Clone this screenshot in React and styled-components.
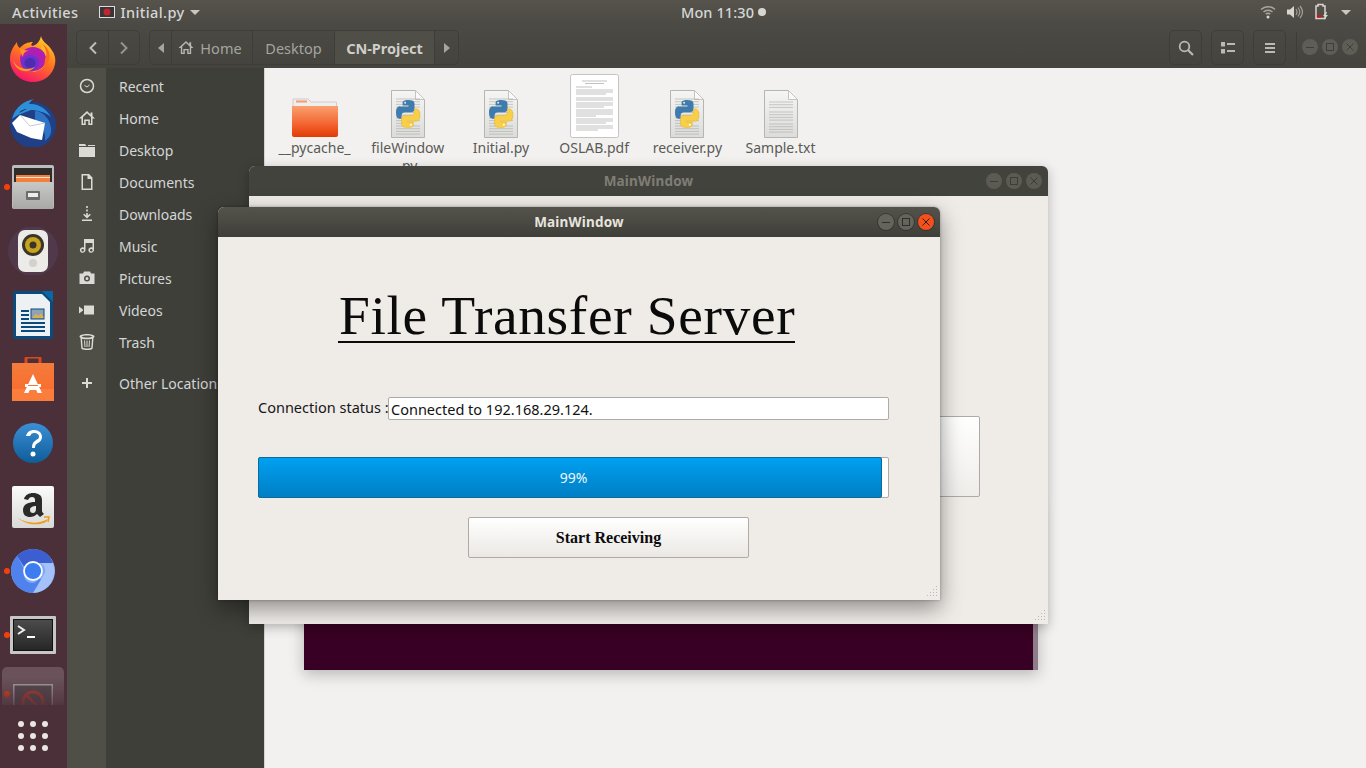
import React from "react";
import styled, { createGlobalStyle } from "styled-components";

const Global = createGlobalStyle`
  html, body { margin: 0; padding: 0; background: #2c2c2c; }
  * { box-sizing: border-box; }
  body { font-family: "Noto Sans", "Open Sans", sans-serif; }
`;

const Desktop = styled.div`
  position: relative;
  width: 1366px;
  height: 768px;
  overflow: hidden;
  display: flex;
  flex-direction: column;
  background: #45443e;
`;

/* top panel */
const Panel = styled.header`
  height: 24px;
  flex: none;
  display: flex;
  align-items: center;
  justify-content: space-between;
  padding: 0 15px 0 12px;
  color: #d5d7d6;
  font-size: 14.5px;
  font-weight: 500;
  letter-spacing: 0.4px;
  background: linear-gradient(#55534b, #4c4a44);
  position: relative;
`;
const PanelLeft = styled.div`
  display: flex;
  align-items: center;
`;
const AppMenu = styled.div`
  display: flex;
  align-items: center;
  gap: 5px;
  margin-left: 21px;
`;
const Clock = styled.div`
  position: absolute;
  left: 681px;
  top: 0;
  height: 24px;
  display: flex;
  align-items: center;
  gap: 4px;
  letter-spacing: 0.1px;
`;
const ClockDot = styled.span`
  width: 8px;
  height: 8px;
  border-radius: 50%;
  background: #d8d6d0;
`;
const Tray = styled.div`
  display: flex;
  align-items: center;
  gap: 11px;
`;
const Caret = styled.span`
  width: 0;
  height: 0;
  border-left: 5px solid transparent;
  border-right: 5px solid transparent;
  border-top: 5px solid #c9c7c0;
`;

const Main = styled.div`
  flex: 1;
  display: flex;
  min-height: 0;
`;

/* dock */
const Dock = styled.nav`
  width: 67px;
  flex: none;
  display: flex;
  flex-direction: column;
  background: #4b2f39;
`;
const DockApps = styled.div`
  height: 681px;
  padding-top: 3px;
  overflow: hidden;
  display: flex;
  flex-direction: column;
  -webkit-mask-image: linear-gradient(#000 96%, rgba(0, 0, 0, 0.25));
`;
const DockItem = styled.div`
  position: relative;
  height: 64px;
  flex: none;
  display: flex;
  align-items: center;
  justify-content: center;
  margin: 0 3px 0 2px;
  padding-top: ${(p) => (p.$active ? 10 : 0)}px;
  border-radius: 5px;
  background: ${(p) => (p.$active ? "rgba(255,255,255,0.17)" : "transparent")};
`;
const RunDot = styled.span`
  position: absolute;
  left: 2px;
  top: ${(p) => (p.$active ? "42%" : "50%")};
  margin-top: -3px;
  width: 6px;
  height: 6px;
  border-radius: 50%;
  background: #f6400c;
`;
const ShowApps = styled.div`
  margin: 16px 0 0 18px;
  display: grid;
  grid-template-columns: repeat(3, 6px);
  grid-auto-rows: 6px;
  gap: 6px;
`;
const ShowDot = styled.span`
  border-radius: 50%;
  background: #e9e7e4;
`;

/* file manager */
const Nautilus = styled.section`
  flex: 1;
  min-width: 0;
  display: flex;
  flex-direction: column;
`;
const HeaderBar = styled.div`
  height: 44px;
  flex: none;
  display: flex;
  align-items: flex-start;
  padding: 6px 0 0 9px;
  background: linear-gradient(#4c4a44, #44433d);
`;
const Group = styled.div`
  height: 35px;
  flex: none;
  display: flex;
  border: 1px solid #3e3d38;
  border-radius: 5px;
  margin-left: ${(p) => p.$ml || 0}px;
  overflow: hidden;
`;
const Seg = styled.div`
  width: ${(p) => p.$w}px;
  display: flex;
  align-items: center;
  justify-content: center;
  gap: 6px;
  font-size: 14.5px;
  color: ${(p) => (p.$on ? "#cfcfca" : "#a5a59f")};
  font-weight: ${(p) => (p.$on ? 700 : 400)};
  background: ${(p) => (p.$on ? "#4f4e47" : "transparent")};
  border-left: ${(p) => (p.$first ? "none" : "1px solid #3e3d38")};
  padding-right: ${(p) => p.$pr || 0}px;
`;
const Separator = styled.div`
  width: 1px;
  height: 30px;
  flex: none;
  margin: 2px 0 0 10px;
  background: #3e3d38;
`;
const WinDots = styled.div`
  display: flex;
  flex: none;
  gap: 4px;
  margin: 9px 0 0 5px;
  height: 16px;
  align-items: center;
`;
const WinBtn = styled.span`
  width: 16px;
  height: 16px;
  border-radius: 50%;
  display: flex;
  align-items: center;
  justify-content: center;
  background: ${(p) => p.$bg};
  box-shadow: ${(p) => (p.$ring ? "0 0 0 1px rgba(0,0,0,0.25)" : "none")};
`;
const Body = styled.div`
  flex: 1;
  min-height: 0;
  display: flex;
`;
const Side = styled.aside`
  width: 197px;
  flex: none;
  padding-top: 2px;
  display: flex;
  flex-direction: column;
  background: linear-gradient(90deg, #4f4f47 39px, #3f3f39 39px);
`;
const SideRow = styled.div`
  height: 32px;
  flex: none;
  display: flex;
  align-items: center;
  margin-top: ${(p) => p.$mt || 0}px;
  color: #d3d6d6;
  font-size: 14px;
  white-space: nowrap;
`;
const SideIcon = styled.span`
  width: 39px;
  flex: none;
  display: flex;
  justify-content: center;
  color: #dcdad5;
  margin-right: 13px;
`;
const Content = styled.main`
  flex: 1;
  background: #f2f1f0;
  border-left: 1px solid #d6d4d0;
  padding: 6px 0 0 3px;
  display: flex;
  align-items: flex-start;
`;
const FileItem = styled.div`
  width: 93.2px;
  flex: none;
  display: flex;
  flex-direction: column;
  align-items: center;
`;
const FileThumb = styled.div`
  height: 64px;
  display: flex;
  align-items: flex-end;
  justify-content: center;
`;
const FileName = styled.div`
  margin-top: 1px;
  font-size: 14px;
  line-height: 18px;
  color: #5a5a55;
  text-align: center;
  width: 84px;
  white-space: ${(p) => (p.$wrap ? "normal" : "nowrap")};
  display: flex;
  justify-content: center;
  flex-wrap: wrap;
`;

/* floating windows */
const Terminal = styled.div`
  position: absolute;
  left: 304px;
  top: 500px;
  width: 734px;
  height: 170px;
  background: #380024;
  border-right: 5px solid #8f7c8a;
  box-shadow: 0 4px 14px rgba(0, 0, 0, 0.25);
`;
const Win = styled.div`
  position: absolute;
  left: ${(p) => p.$x}px;
  top: ${(p) => p.$y}px;
  width: ${(p) => p.$w}px;
  height: ${(p) => p.$h}px;
  display: flex;
  flex-direction: column;
  background: #efebe7;
  border-radius: 6px 6px 0 0;
  box-shadow: ${(p) =>
    p.$focus
      ? "0 8px 22px rgba(0,0,0,0.42), 0 0 3px rgba(0,0,0,0.3)"
      : "0 3px 12px rgba(0,0,0,0.25)"};
`;
const TitleBar = styled.div`
  position: relative;
  height: 30px;
  flex: none;
  border-radius: 6px 6px 0 0;
  display: flex;
  align-items: center;
  justify-content: center;
  font-size: 13.5px;
  font-weight: 700;
  letter-spacing: 0.2px;
  color: ${(p) => (p.$focus ? "#e6e4de" : "#7f7d76")};
  background: ${(p) =>
    p.$focus ? "linear-gradient(#54534b, #3f3f39)" : "#43433d"};
`;
const TitleBtns = styled.div`
  position: absolute;
  right: 6px;
  top: 7px;
  display: flex;
  gap: 4px;
`;
const BackBody = styled.div`
  flex: 1;
  padding: 220px 0 0 40px;
`;
const BackWidget = styled.div`
  width: 691px;
  height: 81px;
  background: linear-gradient(#fff, #efedea);
  border: 1px solid #aeaaa5;
  border-radius: 2px;
`;
const Grip = styled.svg`
  position: absolute;
  right: 2px;
  bottom: 2px;
`;
const ServerBody = styled.div`
  flex: 1;
  padding: 45px 51px 0 40px;
  display: flex;
  flex-direction: column;
`;
const ServerTitle = styled.h1`
  margin: 0 0 0 80px;
  padding-left: 1px;
  width: 457px;
  font: 400 55.5px/67px "Liberation Serif", serif;
  letter-spacing: 0.62px;
  white-space: nowrap;
  color: #0b0b0b;
  border-bottom: 2px solid #0b0b0b;
  height: 61px;
`;
const StatusRow = styled.div`
  display: flex;
  align-items: center;
  height: 23px;
  margin-top: 54px;
  font-size: 14.5px;
  color: #16161a;
`;
const StatusLabel = styled.span`
  width: 130px;
  flex: none;
  white-space: nowrap;
  margin-top: -4px;
`;
const StatusInput = styled.div`
  flex: 1;
  height: 23px;
  padding-left: 2px;
  display: flex;
  align-items: center;
  background: #fff;
  border: 1px solid #aeaaa5;
  border-radius: 2px;
  color: #111;
`;
const Progress = styled.div`
  position: relative;
  height: 41px;
  margin-top: 37px;
  background: #fff;
  border: 1px solid #aeaaa5;
  border-radius: 2px;
`;
const Chunk = styled.div`
  height: 41px;
  margin: -1px 0 0 -1px;
  background: linear-gradient(#00a0f1, #007fc4);
  border: 1px solid #0b6c9c;
  border-radius: 2px;
`;
const ProgressText = styled.span`
  position: absolute;
  left: 0;
  right: 0;
  top: 11px;
  text-align: center;
  color: #f2f6f8;
  font-size: 14px;
  line-height: 18px;
`;
const StartButton = styled.button`
  width: 281px;
  height: 41px;
  margin: 19px 0 0 210px;
  background: linear-gradient(#fff, #ebe8e4);
  border: 1px solid #aeaaa5;
  border-radius: 2px;
  font: 700 16px "Liberation Serif", serif;
  color: #0c0c0c;
`;

/* drawings */
const snakePath =
  "M11.9 1C7 1 7.3 3.1 7.3 3.1v2.3H12v.7H5.2S2 5.7 2 10.9s2.8 5 2.8 5h1.7v-2.4s-.1-2.8 2.8-2.8h4.8s2.7 0 2.7-2.6V3.8S17.2 1 11.9 1z";

const Page = ({ children }) => (
  <svg width="34" height="48" viewBox="0 0 34 48">
    <defs>
      <linearGradient id="pg" x1="0" y1="0" x2="0" y2="1">
        <stop offset="0" stopColor="#f5f5f3" />
        <stop offset="1" stopColor="#dcdcda" />
      </linearGradient>
    </defs>
    <path d="M.5.5h24l9 9v38H.5z" fill="url(#pg)" stroke="#b5b5b2" />
    <path d="M24.5.5v9h9z" fill="#fafafa" stroke="#c4c4c1" />
    {children}
  </svg>
);
const TextLines = ({ y0 = 12, n = 12, x1 = 5, x2 = 29 }) => (
  <g stroke="#a9a9a6" strokeWidth=".6">
    {Array.from({ length: n }).map((_, i) => (
      <path key={i} d={`M${x1} ${y0 + i * 2.7}H${i % 5 === 4 ? x2 - 8 : x2}`} />
    ))}
  </g>
);
const PyIcon = () => (
  <Page>
    <TextLines y0={9} n={14} />
    <g transform="translate(2.5 8.75) scale(1.25)">
      <path d={snakePath} fill="#3f7cad" />
      <circle cx="9.3" cy="3.2" r=".8" fill="#dfeaf2" />
      <g transform="rotate(180 11.6 12)">
        <path d={snakePath} fill="#f9cf47" stroke="#d9a520" strokeWidth=".3" />
        <circle cx="9.3" cy="3.2" r=".8" fill="#fff" />
      </g>
    </g>
  </Page>
);
const TxtIcon = () => (
  <Page>
    <TextLines y0={12} n={3} x1={5} x2={29} />
    <TextLines y0={22} n={4} />
    <TextLines y0={34} n={4} />
  </Page>
);
const PdfIcon = () => (
  <svg width="49" height="64" viewBox="0 0 49 64">
    <rect x=".5" y=".5" width="48" height="63" rx="2" fill="#fff" stroke="#c4c4c2" />
    <g stroke="#777" strokeWidth=".45">
      <path d="M12 7h25M15 9.5h19M6 13h16" />
      <path d="M6 16h37M6 18h37M6 20h30M6 24h37M6 26h37M6 29h37M6 31h37M6 33h28M6 36h37M6 38h37M6 40h37M6 42h20M6 45h37M6 47h37M6 49h30M6 52h37M6 54h37M6 56h22" />
    </g>
  </svg>
);
const FolderIcon = () => (
  <svg width="46" height="40" viewBox="0 0 46 40">
    <defs>
      <linearGradient id="fd" x1="0" y1="0" x2="0" y2="1">
        <stop offset="0" stopColor="#f9a06f" />
        <stop offset=".6" stopColor="#f4632f" />
        <stop offset="1" stopColor="#e13b05" />
      </linearGradient>
    </defs>
    <path d="M1 1h15l3 3h25.5v8H1z" fill="#efeeec" stroke="#cfcdca" />
    <rect x="4" y="2.5" width="11" height="2" fill="#f59a72" />
    <path d="M0 8h46v29a2 2 0 0 1-2 2H2a2 2 0 0 1-2-2z" fill="url(#fd)" />
  </svg>
);
const Ico = ({ children, s = 16, vb = "0 0 16 16" }) => (
  <svg width={s} height={s} viewBox={vb} fill="currentColor">
    {children}
  </svg>
);
const homeOutline =
  "M8 1L0 8.5h2.500V15h4.200v-4h2.600v4h4.200V8.500H16l-2.500-2.300V2.500h-2v1.900zM8 3.200l4 3.800v6.500h-1.200v-4H5.200v4H4V7z";
const sideIcons = {
  clock: (
    <Ico>
      <circle cx="8" cy="8" r="6.5" fill="none" stroke="currentColor" strokeWidth="1.5" />
      <path d="M5.5 7.5L8 9l2.500-2" fill="none" stroke="currentColor" />
    </Ico>
  ),
  home: (
    <Ico>
      <path fillRule="evenodd" d={homeOutline} />
    </Ico>
  ),
  folder: (
    <Ico>
      <path d="M0 2h6l1.500 2H0zM0 5h16v10H0zM9 3h7v1H9z" />
    </Ico>
  ),
  doc: (
    <Ico>
      <path
        fillRule="evenodd"
        d="M2.5 0H10l3.500 3.500V16h-11zM4 1.500v13h8V5H8.500V1.500z"
      />
    </Ico>
  ),
  down: (
    <Ico>
      <path d="M7.2 0h1.600v2H7.200zM7.200 3.500h1.600v2H7.200zM7.200 7h1.600v2.500l2-1.800 1 1L8 12.500 4.200 8.700l1-1 2 1.800zM3 13.500h10V15H3z" />
    </Ico>
  ),
  music: (
    <Ico>
      <path
        fillRule="evenodd"
        d="M5 1h10v11a2.800 2.800 0 1 1-1.500-2.500V5H6.500v7A2.800 2.800 0 1 1 5 9.500zM3.700 11a1.300 1.300 0 1 0 0 2.600 1.300 1.300 0 0 0 0-2.600zm8.600 0a1.300 1.300 0 1 0 0 2.600 1.300 1.300 0 0 0 0-2.600z"
      />
    </Ico>
  ),
  camera: (
    <Ico>
      <path
        fillRule="evenodd"
        d="M5 1.500h6L12 3.500h3.500V14H.5V3.500H4zM8 5.500a3 3 0 1 0 0 6 3 3 0 0 0 0-6zm0 1.500a1.500 1.500 0 1 1 0 3 1.500 1.500 0 0 1 0-3z"
      />
    </Ico>
  ),
  video: (
    <Ico>
      <path d="M5 3.500h10v9H5zM0 4.500l4 3v1l-4 3z" />
    </Ico>
  ),
  trash: (
    <Ico>
      <path
        fillRule="evenodd"
        d="M8 0c4.200 0 7.500 1 7.500 2.500 0 .7-.4 1-1 1.400l-.8 10.300C13.500 15.500 10.500 16 8 16s-5.500-.5-5.700-1.800L1.500 3.900C.9 3.500.5 3.200.5 2.500.5 1 3.800 0 8 0zM3 4.700l.7 9c.6.500 2.500.8 4.300.8s3.700-.3 4.300-.8l.7-9c-1.300.4-3.100.6-5 .6s-3.700-.2-5-.6zM8 1.500c-2.800 0-5 .5-5.600 1 .6.500 2.800 1 5.600 1s5-.5 5.600-1c-.6-.5-2.800-1-5.600-1zM5 6.500h1l.5 6.500h-1zM7.500 6.500h1V13h-1zM10 6.500h1L10.500 13h-1z"
      />
    </Ico>
  ),
  plus: (
    <Ico>
      <path d="M7 3h2v4h4v2H9v4H7V9H3V7h4z" />
    </Ico>
  ),
};
const Chevron = ({ dir, color }) => (
  <svg width="10" height="14" viewBox="0 0 10 14">
    <path
      d={dir === "l" ? "M8 1.5L2.500 7 8 12.500" : "M2 1.500L7.500 7 2 12.500"}
      fill="none"
      stroke={color}
      strokeWidth="2"
    />
  </svg>
);
const Tri = ({ dir }) => (
  <svg width="6" height="10" viewBox="0 0 6 10">
    <path d={dir === "l" ? "M6 0v10L0 5z" : "M0 0v10l6-5z"} fill="#a5a59f" />
  </svg>
);
const WinGlyph = ({ kind, color }) => (
  <svg width="10" height="10" viewBox="0 0 10 10" fill="none" stroke={color} strokeWidth="1">
    {kind === "min" && <path d="M1 5.5h8" />}
    {kind === "max" && <rect x="1.5" y="1.5" width="7" height="7" />}
    {kind === "close" && <path d="M1.5 1.5l7 7M8.500 1.500l-7 7" />}
  </svg>
);

const Firefox = () => (
  <svg width="48" height="48" viewBox="0 0 48 48">
    <defs>
      <linearGradient id="ff" x1=".8" y1="0" x2=".3" y2="1">
        <stop offset="0" stopColor="#ffd52e" />
        <stop offset=".45" stopColor="#ff7a1c" />
        <stop offset="1" stopColor="#f6126c" />
      </linearGradient>
    </defs>
    <path
      d="M32 1c1 6 7 8 10 13 4 5 5 10 4 15-2 11-11 18-22 18C11 47 1 37 1 24 1 17 4 12 8 7c0 3 1 5 3 6 3-4 8-6 13-6-2 2-2 3-1 4 5-1 8-5 9-10z"
      fill="url(#ff)"
    />
    <path d="M32 8c4 4 7 9 6 16-1 8-8 13-15 13 9-3 11-12 9-29z" fill="#ffbb1f" opacity=".9" />
    <ellipse cx="24" cy="24" rx="13" ry="12" fill="#b01fb4" />
    <ellipse cx="21" cy="28" rx="9" ry="8" fill="#6a33c9" />
    <ellipse cx="21" cy="28" rx="5.5" ry="5" fill="#4e2bb0" />
    <path d="M4 24c3 10 14 12 22 8-6 7-20 6-22-8zM11 13c3 2 6 3 9 2-4 2-6 3-6 7-2-3-3-6-3-9z" fill="#ff9a1f" />
    <path d="M36 24c3-5 1-11-3-15 6 3 9 10 7 16-1 3-3 6-6 8 1-3 2-6 2-9z" fill="#ff6a1f" />
  </svg>
);
const Thunderbird = () => (
  <svg width="48" height="48" viewBox="0 0 48 48">
    <circle cx="24" cy="26" r="23" fill="#1f3f86" />
    <path d="M3 20C6 8 15 2 25 0c-3 2-4 3-5 5 9-1 18 5 22 13-6-5-14-7-20-7L9 16z" fill="#2d8fd8" />
    <path d="M26 12c8 0 15 8 16 17 1 6-2 10-6 13 1-8-2-15-10-18z" fill="#2e73c4" />
    <path d="M3 24l8-8 25 8-3 17-11-2-14-6z" fill="#fff" />
    <path d="M11 16l10 11 15-3" fill="none" stroke="#b7bccb" strokeWidth=".8" />
    <path d="M10 14l8-4c-3 0-6 1-8 4z" fill="#1a3060" />
  </svg>
);
const Files = () => (
  <svg width="42" height="44" viewBox="0 0 42 44">
    <defs>
      <linearGradient id="fb" x1="0" y1="0" x2="0" y2="1">
        <stop offset="0" stopColor="#c8c8c6" />
        <stop offset="1" stopColor="#a8a8a6" />
      </linearGradient>
    </defs>
    <rect x="0" y="0" width="42" height="44" rx="2" fill="#bcbcba" />
    <rect x="2" y="3" width="38" height="14" fill="#2e2d2b" />
    <rect x="4" y="10" width="34" height="7" fill="#f57f3d" />
    <rect x="4" y="12" width="34" height="1" fill="#fbe3d5" />
    <rect x="1" y="17" width="40" height="27" rx="1" fill="url(#fb)" />
    <rect x="14" y="26" width="14" height="9" rx="1" fill="#6d6d6a" />
    <rect x="16" y="28" width="10" height="4" fill="#eee" />
  </svg>
);
const Speaker = () => (
  <svg width="52" height="48" viewBox="0 0 52 48">
    <circle cx="26" cy="24" r="25" fill="#5a5275" opacity=".3" />
    <rect x="11" y="3" width="30" height="42" rx="7" fill="#ecebe8" />
    <circle cx="26" cy="18" r="11" fill="#3a3527" />
    <circle cx="26" cy="18" r="8" fill="#c6a31f" />
    <circle cx="26" cy="18" r="3.5" fill="#3a3527" />
    <circle cx="26" cy="36" r="4" fill="#d3d1cd" />
  </svg>
);
const Writer = () => (
  <svg width="40" height="48" viewBox="0 0 40 48">
    <path d="M2 0h38v46a2 2 0 0 1-2 2H2a2 2 0 0 1-2-2V2a2 2 0 0 1 2-2z" fill="#0b4a7c" />
    <path d="M29 0h11v11z" fill="#0a67a5" />
    <path d="M3 3h26l8 8v34H3z" fill="#eef1f4" />
    <rect x="18" y="18" width="13" height="10" fill="#8ea3ba" stroke="#0b4a7c" />
    <path d="M19 27l4-4 3 2 2-3 3 5z" fill="#d9b24a" />
    <path d="M8 19h8v2H8zM8 23h8v2H8zM8 27h8v2H8zM8 31h24v2H8zM8 35h24v2H8zM8 39h24v2H8z" fill="#0b4a7c" />
  </svg>
);
const Software = () => (
  <svg width="42" height="44" viewBox="0 0 42 44">
    <defs>
      <linearGradient id="sw" x1="0" y1="0" x2="0" y2="1">
        <stop offset="0" stopColor="#f47b3c" />
        <stop offset="1" stopColor="#f96a28" />
      </linearGradient>
    </defs>
    <path d="M14 8V2q0-2 2-2h10q2 0 2 2v6" fill="none" stroke="#d94a1b" strokeWidth="3" />
    <path d="M0 6h42v38H0z" fill="url(#sw)" />
    <path d="M0 32h42v12H0z" fill="#fb8544" opacity=".7" />
    <path d="M21 17l-9 19h4.500l1.200-3h6.600l1.200 3H30z" fill="#fff" />
    <path d="M13 27h16v3H13z" fill="#fff" />
    <path d="M16 28h10v1H16z" fill="#f47b3c" />
  </svg>
);
const Help = () => (
  <svg width="40" height="40" viewBox="0 0 40 40">
    <defs>
      <linearGradient id="hl" x1="0" y1="0" x2="0" y2="1">
        <stop offset="0" stopColor="#3c8fd6" />
        <stop offset="1" stopColor="#0e5d9a" />
      </linearGradient>
    </defs>
    <circle cx="20" cy="20" r="20" fill="url(#hl)" />
    <path
      d="M13 13c1-4 4-6 8-6 5 0 8 3 8 7 0 3-2 5-4 6-2 1-3 2-3 5h-3c0-4 1-6 3-7 2-2 4-2 4-4 0-3-2-4-5-4-2 0-3 1-4 3z"
      fill="#fff"
    />
    <circle cx="20" cy="31" r="2.5" fill="#fff" />
  </svg>
);
const Amazon = () => (
  <svg width="42" height="42" viewBox="0 0 42 42">
    <defs>
      <linearGradient id="az" x1="0" y1="0" x2="0" y2="1">
        <stop offset="0" stopColor="#fafafa" />
        <stop offset="1" stopColor="#d9d9d7" />
      </linearGradient>
    </defs>
    <rect width="42" height="42" rx="2" fill="url(#az)" />
    <path
      fillRule="evenodd"
      d="M12 13c1-4 5-6 9-6 5 0 9 2 9 7v11c0 1 1 2 2 3l-4 3c-1-1-2-2-3-3-2 2-4 3-7 3-4 0-7-2-7-7 0-6 6-8 12-8v-2c0-2-1-3-3-3s-3 1-4 3zm12 7c-3 0-6 1-6 4 0 2 1 3 3 3 2 0 3-2 3-4z"
      fill="#2a2a2a"
    />
    <path d="M6 32c9 6 21 6 30 1l-2 3c-8 4-20 3-28-4z" fill="#f19a17" />
    <path d="M32 31l5 0-1 5" fill="none" stroke="#f19a17" strokeWidth="1.5" />
  </svg>
);
const Chromium = () => (
  <svg width="44" height="44" viewBox="0 0 44 44">
    <circle cx="22" cy="22" r="22" fill="#7fa8f5" />
    <path d="M6 7a22 22 0 0 1 33 1l3 6H22a8 8 0 0 0-8 5z" fill="#3b5fd1" />
    <path d="M6 7a22 22 0 0 0 16 37l4-1 7-13-5 0a8 8 0 0 1-14-8z" fill="#4f82ec" />
    <path d="M42 14a22 22 0 0 1-20 30l10-17a8 8 0 0 0-3-13z" fill="#a4c1f9" />
    <circle cx="22" cy="22" r="9" fill="#3d7df2" stroke="#fff" strokeWidth="1.8" />
  </svg>
);
const TerminalIcon = () => (
  <svg width="46" height="38" viewBox="0 0 46 38">
    <defs>
      <linearGradient id="tm" x1="0" y1="0" x2="0" y2="1">
        <stop offset="0" stopColor="#4c4c4c" />
        <stop offset="1" stopColor="#262626" />
      </linearGradient>
    </defs>
    <rect width="46" height="38" rx="1" fill="#c6c6c4" />
    <rect x="3.5" y="3.5" width="39" height="31" fill="url(#tm)" stroke="#111" />
    <path d="M8 10l6 4-6 4" fill="none" stroke="#eee" strokeWidth="2" />
    <path d="M17 20h8v2h-8z" fill="#fff" />
  </svg>
);
const Blocked = () => (
  <svg width="40" height="40" viewBox="0 0 40 40">
    <rect x=".5" y=".5" width="39" height="39" fill="#534950" stroke="#a8a4a4" strokeWidth="2" />
    <circle cx="20" cy="18" r="10" fill="none" stroke="#b33d2c" strokeWidth="3" />
    <path d="M13 11l14 14" stroke="#b33d2c" strokeWidth="3" />
  </svg>
);

const dockApps = [
  { id: "ff", icon: <Firefox /> },
  { id: "tb", icon: <Thunderbird /> },
  { id: "files", icon: <Files />, run: true },
  { id: "rb", icon: <Speaker /> },
  { id: "lo", icon: <Writer /> },
  { id: "sw", icon: <Software /> },
  { id: "help", icon: <Help /> },
  { id: "az", icon: <Amazon /> },
  { id: "cr", icon: <Chromium />, run: true },
  { id: "term", icon: <TerminalIcon />, run: true },
  { id: "py", icon: <Blocked />, run: true, active: true },
];

const places = [
  ["clock", "Recent"],
  ["home", "Home"],
  ["folder", "Desktop"],
  ["doc", "Documents"],
  ["down", "Downloads"],
  ["music", "Music"],
  ["camera", "Pictures"],
  ["video", "Videos"],
  ["trash", "Trash"],
];

const files = [
  { name: "__pycache_", thumb: <FolderIcon /> },
  { name: "fileWindow .py", thumb: <PyIcon />, wrap: true },
  { name: "Initial.py", thumb: <PyIcon /> },
  { name: "OSLAB.pdf", thumb: <PdfIcon /> },
  { name: "receiver.py", thumb: <PyIcon /> },
  { name: "Sample.txt", thumb: <TxtIcon /> },
];

const GripDots = () => (
  <Grip width="12" height="12" viewBox="0 0 12 12" fill="#bdb9b4">
    {[[10, 0], [7, 3], [10, 3], [4, 6], [7, 6], [10, 6], [1, 9], [4, 9], [7, 9], [10, 9]].map(
      ([x, y]) => (
        <rect key={`${x}-${y}`} x={x} y={y} width="1" height="1" />
      )
    )}
  </Grip>
);

export default function App() {
  return (
    <Desktop>
      <Global />
      <Panel>
        <PanelLeft>
          Activities
          <AppMenu>
            <svg width="16" height="12" viewBox="0 0 16 12">
              <rect x=".5" y=".5" width="15" height="11" fill="#3a3438" stroke="#ddd" />
              <circle cx="8" cy="6" r="3.5" fill="#c0272d" />
            </svg>
            Initial.py
            <Caret />
          </AppMenu>
        </PanelLeft>
        <Clock>
          Mon 11:30
          <ClockDot />
        </Clock>
        <Tray>
          <svg width="16" height="14" viewBox="0 0 16 14" fill="none" stroke="#a9a7a0" strokeWidth="1.5">
            <path d="M1 4.5a10 10 0 0 1 14 0M3.500 7a6.500 6.500 0 0 1 9 0M5.800 9.300a3 3 0 0 1 4.400 0" />
            <circle cx="8" cy="12" r="1.5" fill="#d8d6d0" stroke="none" />
          </svg>
          <svg width="16" height="14" viewBox="0 0 16 14">
            <path d="M0 4.5h3L7 1v12L3 9.500H0z" fill="#d8d6d0" />
            <path d="M9 4q2 3 0 6M11 2.500q3.500 4.500 0 9M13 1q5 6 0 12" fill="none" stroke="#a09e97" strokeWidth="1.2" />
          </svg>
          <svg width="16" height="18" viewBox="0 0 16 18">
            <path d="M4 1.5h5V3h2v12.500H2V3h2z" fill="none" stroke="#d8d6d0" strokeWidth="1.5" />
            <rect x="3" y="12" width="4" height="2.5" fill="#e01010" />
            <path d="M12 9l-3 4h2l-1 4 4-5h-2l1-3z" fill="#d8d6d0" />
          </svg>
          <Caret />
        </Tray>
      </Panel>

      <Main>
        <Dock>
          <DockApps>
            {dockApps.map((a) => (
              <DockItem key={a.id} $active={a.active}>
                {a.run && <RunDot $active={a.active} />}
                {a.icon}
              </DockItem>
            ))}
          </DockApps>
          <ShowApps>
            {Array.from({ length: 9 }).map((_, i) => (
              <ShowDot key={i} />
            ))}
          </ShowApps>
        </Dock>

        <Nautilus>
          <HeaderBar>
            <Group>
              <Seg $w={31} $first>
                <Chevron dir="l" color="#bdbcb6" />
              </Seg>
              <Seg $w={31}>
                <Chevron dir="r" color="#94948e" />
              </Seg>
            </Group>
            <Group $ml={9}>
              <Seg $w={21} $first>
                <Tri dir="l" />
              </Seg>
              <Seg $w={81} $pr={4}>
                <svg width="16" height="15" viewBox="0 0 16 16" fill="#b8b7b1">
                  <path fillRule="evenodd" d={homeOutline} />
                </svg>
                Home
              </Seg>
              <Seg $w={82}>Desktop</Seg>
              <Seg $w={100} $on>
                CN-Project
              </Seg>
              <Seg $w={24}>
                <Tri dir="r" />
              </Seg>
            </Group>
            <Group $ml={710}>
              <Seg $w={31} $first>
                <svg width="16" height="16" viewBox="0 0 16 16" fill="none" stroke="#bab9b3" strokeWidth="1.8">
                  <circle cx="6.5" cy="6.5" r="4.8" />
                  <path d="M10 10l5 5" strokeWidth="2.2" />
                </svg>
              </Seg>
            </Group>
            <Group $ml={9}>
              <Seg $w={31} $first>
                <svg width="14" height="12" viewBox="0 0 14 12" fill="#bab9b3">
                  <path d="M0 0h4v4.500H0zM0 7h4v4.500H0zM6 1h8v2H6zM6 8h8v2H6z" />
                </svg>
              </Seg>
            </Group>
            <Group $ml={9}>
              <Seg $w={31} $first>
                <svg width="12" height="12" viewBox="0 0 12 12" fill="#bab9b3">
                  <path d="M1 1h10v2H1zM1 5h10v2H1zM1 9h10v2H1z" />
                </svg>
              </Seg>
            </Group>
            <Separator />
            <WinDots>
              <WinBtn $bg="#5e5d56">
                <WinGlyph kind="min" color="#3f3e39" />
              </WinBtn>
              <WinBtn $bg="#5e5d56">
                <WinGlyph kind="max" color="#3f3e39" />
              </WinBtn>
              <WinBtn $bg="#5e5d56">
                <WinGlyph kind="close" color="#3f3e39" />
              </WinBtn>
            </WinDots>
          </HeaderBar>
          <Body>
            <Side>
              {places.map(([icon, label]) => (
                <SideRow key={label}>
                  <SideIcon>{sideIcons[icon]}</SideIcon>
                  {label}
                </SideRow>
              ))}
              <SideRow $mt={9}>
                <SideIcon>{sideIcons.plus}</SideIcon>
                Other Locations
              </SideRow>
            </Side>
            <Content>
              {files.map((f) => (
                <FileItem key={f.name}>
                  <FileThumb>{f.thumb}</FileThumb>
                  <FileName $wrap={f.wrap}>{f.name}</FileName>
                </FileItem>
              ))}
            </Content>
          </Body>
        </Nautilus>
      </Main>

      <Terminal />

      <Win $x={249} $y={166} $w={799} $h={458}>
        <TitleBar>
          MainWindow
          <TitleBtns>
            <WinBtn $bg="#5b5a53">
              <WinGlyph kind="min" color="#3d3d37" />
            </WinBtn>
            <WinBtn $bg="#5b5a53">
              <WinGlyph kind="max" color="#3d3d37" />
            </WinBtn>
            <WinBtn $bg="#5b5a53">
              <WinGlyph kind="close" color="#3d3d37" />
            </WinBtn>
          </TitleBtns>
        </TitleBar>
        <BackBody>
          <BackWidget />
        </BackBody>
        <GripDots />
      </Win>

      <Win $x={218} $y={207} $w={722} $h={393} $focus>
        <TitleBar $focus>
          MainWindow
          <TitleBtns>
            <WinBtn $bg="#64635c" $ring>
              <WinGlyph kind="min" color="#2e2e2a" />
            </WinBtn>
            <WinBtn $bg="#64635c" $ring>
              <WinGlyph kind="max" color="#2e2e2a" />
            </WinBtn>
            <WinBtn $bg="#f2501c" $ring>
              <WinGlyph kind="close" color="#3b1a0c" />
            </WinBtn>
          </TitleBtns>
        </TitleBar>
        <ServerBody>
          <ServerTitle>File Transfer Server</ServerTitle>
          <StatusRow>
            <StatusLabel>Connection status :</StatusLabel>
            <StatusInput>Connected to 192.168.29.124.</StatusInput>
          </StatusRow>
          <Progress>
            <Chunk style={{ width: `${Math.floor(0.99 * 631)}px` }} />
            <ProgressText>99%</ProgressText>
          </Progress>
          <StartButton>Start Receiving</StartButton>
        </ServerBody>
        <GripDots />
      </Win>
    </Desktop>
  );
}
